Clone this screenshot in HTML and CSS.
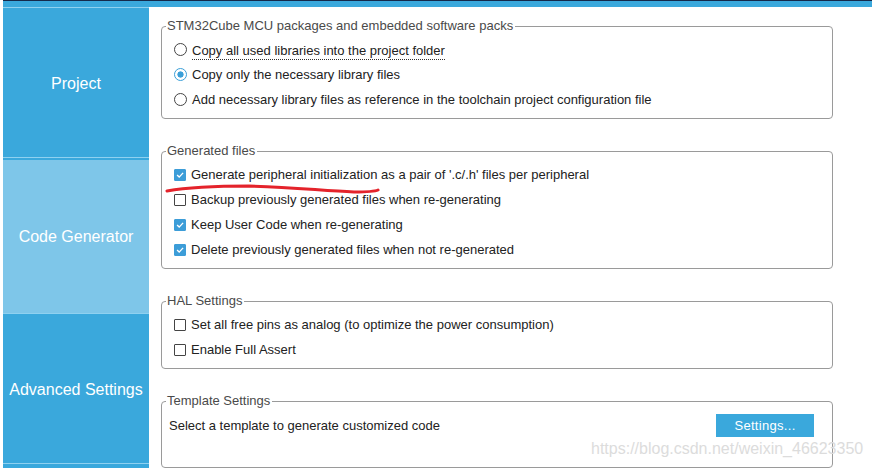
FILE: index.html
```html
<!DOCTYPE html>
<html lang="en">
<head>
  <meta charset="UTF-8" />
  <title>Project Manager - Code Generator</title>
  <link rel="stylesheet" href="styles.css">
</head>
<body>
  <div class="topbar"></div>
  <div class="main">
    <div class="sidebar">
      <div class="tab tab-project">Project</div>
      <div class="tab tab-codegen active">Code Generator</div>
      <div class="tab tab-advanced">Advanced Settings</div>
      <div class="tab tab-rest"></div>
    </div>

    <div class="content">
      <fieldset class="group group-packs">
        <legend>STM32Cube MCU packages and embedded software packs</legend>
        <div class="row"><span class="radio"></span><span class="focused">Copy all used libraries into the project folder</span></div>
        <div class="row"><span class="radio on"></span><span>Copy only the necessary library files</span></div>
        <div class="row"><span class="radio"></span><span>Add necessary library files as reference in the toolchain project configuration file</span></div>
      </fieldset>

      <fieldset class="group">
        <legend>Generated files</legend>
        <div class="row"><span class="check on"><svg viewBox="0 0 11 11"><path d="M2.3 5.6 L4.6 7.8 L8.9 3.2" /></svg></span><span>Generate peripheral initialization as a pair of '.c/.h' files per peripheral</span></div>
        <div class="row"><span class="check"></span><span>Backup previously generated files when re-generating</span></div>
        <div class="row"><span class="check on"><svg viewBox="0 0 11 11"><path d="M2.3 5.6 L4.6 7.8 L8.9 3.2" /></svg></span><span>Keep User Code when re-generating</span></div>
        <div class="row"><span class="check on"><svg viewBox="0 0 11 11"><path d="M2.3 5.6 L4.6 7.8 L8.9 3.2" /></svg></span><span>Delete previously generated files when not re-generated</span></div>
      </fieldset>

      <fieldset class="group">
        <legend>HAL Settings</legend>
        <div class="row"><span class="check"></span><span>Set all free pins as analog (to optimize the power consumption)</span></div>
        <div class="row"><span class="check"></span><span>Enable Full Assert</span></div>
      </fieldset>

      <fieldset class="group group-template">
        <legend>Template Settings</legend>
        <div class="template-row">
          <span>Select a template to generate customized code</span>
          <button class="btn">Settings...</button>
        </div>
      </fieldset>
    </div>
  </div>

  <!-- hand drawn red mark over the screenshot -->
  <svg class="scribble" width="240" height="20" viewBox="0 0 240 20">
    <path d="M3 12 C 20 9, 45 7, 85 7 C 130 8, 160 12, 190 13 C 205 13, 212 12, 214 11" />
  </svg>

  <div class="watermark">https://blog.csdn.net/weixin_46623350</div>
</body>
</html>
```

FILE: styles.css
```css
body {
  margin: 0;
  padding-left: 3px;
  font-family: "Liberation Sans", Arial, sans-serif;
  font-size: 13px;
  color: #222;
  background: #fff;
  height: 468px;
  overflow: hidden;
  position: relative;
}

.topbar {
  height: 6px;
  background: #3aa8dc;
  border-top: 1px solid #15294a;
}

.main {
  display: flex;
}

.sidebar {
  width: 146px;
  flex-shrink: 0;
  display: flex;
  flex-direction: column;
}

.tab {
  background: #3aa8dc;
  border-top: 1px solid #8fd1f0;
  color: #fff;
  font-size: 16px;
  display: flex;
  align-items: center;
  justify-content: center;
  box-sizing: border-box;
  padding-top: 2px;
}

.tab-project {
  height: 150px;
}

.tab-codegen {
  height: 156px;
}

.tab-advanced {
  height: 150px;
}

.tab-rest {
  height: 5px;
}

.tab.active {
  background: #7ec6e9;
  box-shadow: inset 0 2px 0 #3aa8dc;
}

.content {
  padding: 11px 0 0 12px;
}

.group {
  width: 672px;
  box-sizing: border-box;
  margin: 0 0 24px 0;
  padding: 3px 18px 6px 12px;
  border: 1px solid #9a9a9a;
  border-radius: 4px;
}

.group legend {
  margin-left: -8px;
  padding: 0 2px 0 1px;
  line-height: 16px;
  color: #4a4a4a;
}

.row {
  height: 25px;
  display: flex;
  align-items: center;
  gap: 5px;
}

.focused {
  border-bottom: 1px dotted #333;
  line-height: 15px;
  margin-top: 4px;
  padding-bottom: 1px;
}

.radio {
  width: 11px;
  height: 11px;
  border: 1px solid #444;
  border-radius: 50%;
  background: #fff;
  flex-shrink: 0;
}

.radio.on {
  border-color: #3b9fd8;
  background: radial-gradient(circle, #3b9fd8 2.8px, #fff 3.4px);
}

.check {
  width: 10px;
  height: 10px;
  border: 1px solid #444;
  border-radius: 1px;
  background: #fff;
  flex-shrink: 0;
  display: flex;
}

.check.on {
  border-color: #3c9dd8;
  background: #3c9dd8;
}

.check svg {
  width: 10px;
  height: 10px;
}

.check path {
  fill: none;
  stroke: #fff;
  stroke-width: 1.5;
}

.group-template {
  margin-bottom: 0;
  padding-bottom: 30px;
}

.template-row {
  margin: 2px 0 0 -5px;
  height: 23px;
  display: flex;
  align-items: center;
  justify-content: space-between;
}

.btn {
  width: 98px;
  height: 23px;
  border: none;
  background: #3aa8dc;
  color: #fff;
  font-family: "Liberation Sans", Arial, sans-serif;
  font-size: 13px;
  letter-spacing: 0.3px;
  padding: 0;
}

.scribble {
  position: absolute;
  left: 164px;
  top: 179px;
}

.scribble path {
  fill: none;
  stroke: #e4232b;
  stroke-width: 3;
  stroke-linecap: round;
}

.watermark {
  position: absolute;
  left: 591px;
  top: 440px;
  font-size: 16px;
  color: #dcdcdc;
}
```
